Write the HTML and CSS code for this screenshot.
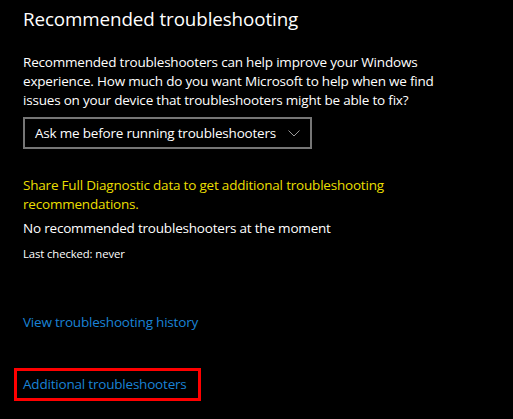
FILE: index.html
```html
<!DOCTYPE html>
<html>
<head>
<meta charset="utf-8">
<link rel="stylesheet" href="styles.css">
</head>
<body>
<main class="page">
  <h1 class="title">Recommended troubleshooting</h1>
  <p class="intro">Recommended troubleshooters can help improve your Windows experience. How much do you want Microsoft to help when we find issues on your device that troubleshooters might be able to fix?</p>
  <div class="select">
    <span class="select-text">Ask me before running troubleshooters</span>
    <svg class="chevron" width="12" height="7" viewBox="0 0 12 7"><path d="M0.5 0.5 L6 6 L11.5 0.5" fill="none" stroke="#9a9a9a" stroke-width="1"/></svg>
  </div>
  <p class="warn">Share Full Diagnostic data to get additional troubleshooting recommendations.</p>
  <p class="status">No recommended troubleshooters at the moment</p>
  <p class="checked">Last checked: never</p>
  <a class="link history">View troubleshooting history</a>
  <div class="highlight"><a class="link">Additional troubleshooters</a></div>
</main>
</body>
</html>
```
FILE: styles.css
```css
html, body {
  margin: 0;
  background: #000;
  color: #fff;
  font-family: "Open Sans", "Noto Sans", sans-serif;
}
.page {
  padding: 0 0 0 23px;
  display: flex;
  flex-direction: column;
  align-items: flex-start;
  font-size: 13.5px;
  letter-spacing: -0.2px;
}
.title {
  margin: 4px 0 0;
  font-size: 18.8px;
  font-weight: 400;
  line-height: 30px;
  letter-spacing: -0.1px;
}
.intro {
  margin: 19px 0 0;
  width: 450px;
  line-height: 19px;
}
.select {
  margin-top: 7px;
  box-sizing: border-box;
  width: 289px;
  height: 32px;
  border: 2px solid #767676;
  display: flex;
  align-items: center;
  justify-content: space-between;
  padding: 0 10px 0 10px;
  white-space: nowrap;
}
.warn {
  margin: 27px 0 0;
  width: 450px;
  color: #ebdf00;
  line-height: 19px;
}
.status {
  margin: 5px 0 0;
  line-height: 19px;
}
.checked {
  margin: 8px 0 0;
  font-size: 11.3px;
  line-height: 16px;
  letter-spacing: -0.1px;
}
.link {
  color: #1a83d6;
  line-height: 19px;
  white-space: nowrap;
}
.history {
  margin-top: 51px;
}
.highlight {
  margin: 36px 0 0 -9px;
  box-sizing: border-box;
  width: 187px;
  height: 33px;
  border: 3px solid #ff0000;
  display: flex;
  align-items: center;
  padding-left: 6px;
}
```
